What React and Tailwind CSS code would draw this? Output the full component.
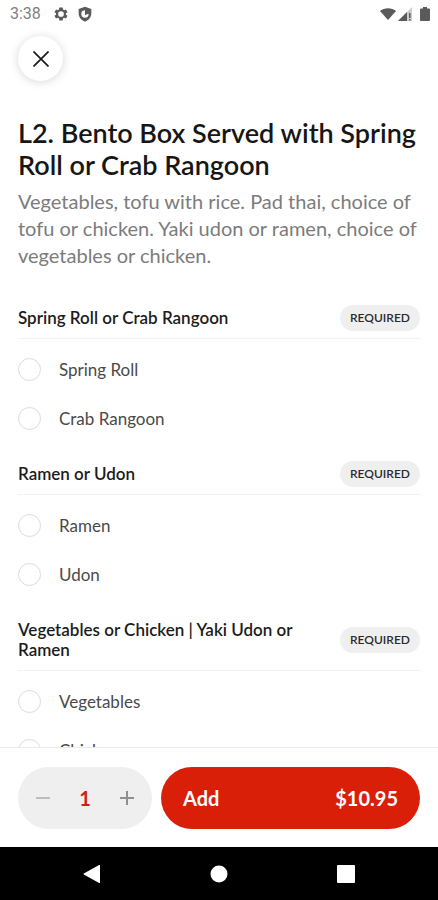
import React, { useState } from "react";

const groups = [
    { title: "Spring Roll or Crab Rangoon", options: ["Spring Roll", "Crab Rangoon"] },
    { title: "Ramen or Udon", options: ["Ramen", "Udon"] },
    { title: "Vegetables or Chicken | Yaki Udon or Ramen", options: ["Vegetables", "Chicken"] },
];

const PRICE = 10.95;

function StatusBar() {
    return (
        <div className="flex h-7 shrink-0 items-center px-2 pl-2.5 text-[#5a5a5a]">
            <span className="font-['Roboto',sans-serif] text-base text-[#808080]">3:38</span>
            <svg className="ml-3 size-4" viewBox="0 0 24 24" fill="currentColor" aria-hidden="true">
                <path
                    fillRule="evenodd"
                    d="M19.4 13a7.500 7.500 0 0 0 0-2l2.400-1.800-2.300-4-2.800 1.100a7.500 7.500 0 0 0-1.700-1L14.600 2.200H9.400L9 5.300a7.500 7.500 0 0 0-1.700 1L4.500 5.200l-2.300 4L4.600 11a7.500 7.500 0 0 0 0 2l-2.400 1.800 2.300 4 2.800-1.100a7.500 7.500 0 0 0 1.700 1l.4 3.100h5.200l.4-3.100a7.500 7.500 0 0 0 1.700-1l2.800 1.100 2.300-4zM12 16.300a4.300 4.300 0 1 1 0-8.600 4.300 4.300 0 0 1 0 8.600z"
                />
            </svg>
            <svg className="ml-2 size-4" viewBox="0 0 24 24" fill="currentColor" aria-hidden="true">
                <path
                    fillRule="evenodd"
                    d="M12 1 2.500 4.500V11c0 6 4 10.500 9.500 12.500 5.500-2 9.500-6.500 9.500-12.500V4.500zM12 6.500a5.500 5.500 0 1 0 5.500 5.500H12z"
                />
                <path d="M12 8.500 16 12l-4 2z" />
            </svg>
            <svg className="ml-auto h-3 w-4" viewBox="0 0 16 12" fill="currentColor" aria-hidden="true">
                <path d="M0 3C4.500-.7 11.500-.7 16 3L8 12z" />
            </svg>
            <svg className="ml-0.5 h-3.5 w-3.5" viewBox="0 0 14 14" fill="currentColor" aria-hidden="true">
                <path d="M14 0v14H0z" opacity="0.3" />
                <path d="M9 5v9H0z" />
                <path d="M11 6h1.500v5H11zM11 12h1.500v1.500H11z" />
            </svg>
            <svg className="ml-2 h-3.5 w-2.5" viewBox="0 0 10 14" fill="currentColor" aria-hidden="true">
                <path d="M3 0h4v1.500h2a1 1 0 0 1 1 1V13a1 1 0 0 1-1 1H1a1 1 0 0 1-1-1V2.500a1 1 0 0 1 1-1h2z" />
            </svg>
        </div>
    );
}

function OptionGroup({ title, options }) {
    return (
        <section className="mb-[11px]" role="radiogroup" aria-label={title}>
            <div className="flex items-center justify-between gap-4 border-b border-[#f2f2f2]">
                <h2 className="max-w-[300px] py-2.5 text-[17px] leading-5 font-semibold text-[#1c1c1c]">
                    {title}
                </h2>
                <span className="flex h-[26px] shrink-0 items-center rounded-full bg-[#efefef] px-2.5 text-xs font-semibold text-[#2b2b2b]">
                    REQUIRED
                </span>
            </div>
            <div className="pt-1.5">
                {options.map((option) => (
                    <label key={option} className="flex h-[49px] items-center gap-[18px] text-[17px] text-[#4a4a4a]">
                        <input
                            type="radio"
                            name={title}
                            className="size-[23px] appearance-none rounded-full border border-[#dcdcdc] bg-white checked:border-[6px] checked:border-[#da1f08]"
                        />
                        {option}
                    </label>
                ))}
            </div>
        </section>
    );
}

function OrderBar() {
    const [count, setCount] = useState(1);

    return (
        <div className="flex h-[100px] shrink-0 items-center gap-[9px] border-t border-[#ebebeb] bg-white px-[18px]">
            <div className="flex h-[62px] w-[134px] shrink-0 items-center justify-between rounded-full bg-[#efefef] px-[18px]">
                <button
                    type="button"
                    aria-label="Remove one"
                    className="text-[#bdbdbd]"
                    onClick={() => setCount(Math.max(1, count - 1))}
                >
                    <svg className="size-3.5" viewBox="0 0 14 14" stroke="currentColor" strokeWidth="2">
                        <path d="M0 7h14" />
                    </svg>
                </button>
                <span className="text-xl font-bold text-[#cf1f14]">{count}</span>
                <button
                    type="button"
                    aria-label="Add one"
                    className="text-[#8f8f8f]"
                    onClick={() => setCount(count + 1)}
                >
                    <svg className="size-3.5" viewBox="0 0 14 14" stroke="currentColor" strokeWidth="2">
                        <path d="M0 7h14M7 0v14" />
                    </svg>
                </button>
            </div>
            <button
                type="button"
                className="flex h-[62px] flex-1 items-center justify-between rounded-full bg-[#da1f08] px-[22px] text-xl font-bold text-white"
            >
                <span>Add</span>
                <span>${(PRICE * count).toFixed(2)}</span>
            </button>
        </div>
    );
}

function NavBar() {
    return (
        <nav className="flex h-[53px] shrink-0 items-center justify-between bg-black px-[83px] text-white">
            <button type="button" aria-label="Back">
                <svg className="size-[18px]" viewBox="0 0 18 18" fill="currentColor">
                    <path d="M17 .5v17a.6.6 0 0 1-.9.5L.8 9.500a.6.6 0 0 1 0-1L16.100 0a.6.6 0 0 1 .9.5z" />
                </svg>
            </button>
            <button type="button" aria-label="Home">
                <svg className="size-[18px]" viewBox="0 0 18 18" fill="currentColor">
                    <circle cx="9" cy="9" r="8.500" />
                </svg>
            </button>
            <button type="button" aria-label="Recent apps">
                <svg className="size-[18px]" viewBox="0 0 18 18" fill="currentColor">
                    <rect width="18" height="18" rx="1" />
                </svg>
            </button>
        </nav>
    );
}

function App() {
    return (
        <div className="flex h-screen flex-col bg-white font-['Lato',sans-serif]">
            <StatusBar />
            <main className="min-h-0 flex-1 overflow-hidden px-[18px] pt-2">
                <button
                    type="button"
                    aria-label="Close"
                    className="flex size-[45px] items-center justify-center rounded-full bg-white text-[#1a1a1a] shadow-[0_1px_10px_rgba(0,0,0,0.16)]"
                >
                    <svg className="size-4" viewBox="0 0 16 16" stroke="currentColor" strokeWidth="1.700">
                        <path d="M.5.5l15 15M15.500.5l-15 15" />
                    </svg>
                </button>
                <h1 className="mt-9 text-[27px] leading-8 font-semibold text-[#161616]">
                    L2. Bento Box Served with Spring Roll or Crab Rangoon
                </h1>
                <p className="mt-[7px] mb-[29px] text-xl leading-[27px] text-[#7c7c7c]">
                    Vegetables, tofu with rice. Pad thai, choice of tofu or chicken. Yaki udon or ramen, choice of
                    vegetables or chicken.
                </p>
                {groups.map((group) => (
                    <OptionGroup key={group.title} title={group.title} options={group.options} />
                ))}
            </main>
            <OrderBar />
            <NavBar />
        </div>
    );
}

export default App;
